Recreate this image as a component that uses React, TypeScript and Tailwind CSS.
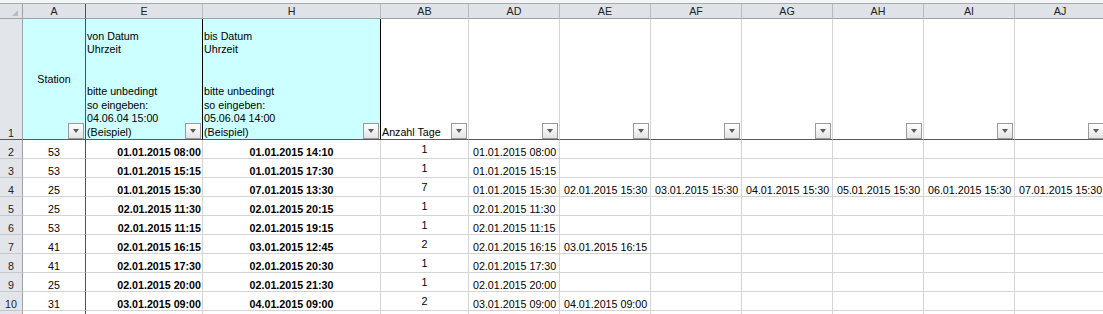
import React from "react";

const COLS =
  "grid grid-cols-[23px_63px_117px_178px_88px_91px_91px_91px_91px_91px_91px_91px]";
const EXTRA = ["AD", "AE", "AF", "AG", "AH", "AI", "AJ"];

type Row = {
  n: number;
  station: string;
  von: string;
  bis: string;
  tage: string;
  dates: string[];
};

const rows: Row[] = [
  { n: 2, station: "53", von: "01.01.2015 08:00", bis: "01.01.2015 14:10", tage: "1", dates: ["01.01.2015 08:00"] },
  { n: 3, station: "53", von: "01.01.2015 15:15", bis: "01.01.2015 17:30", tage: "1", dates: ["01.01.2015 15:15"] },
  {
    n: 4,
    station: "25",
    von: "01.01.2015 15:30",
    bis: "07.01.2015 13:30",
    tage: "7",
    dates: [
      "01.01.2015 15:30",
      "02.01.2015 15:30",
      "03.01.2015 15:30",
      "04.01.2015 15:30",
      "05.01.2015 15:30",
      "06.01.2015 15:30",
      "07.01.2015 15:30",
    ],
  },
  { n: 5, station: "25", von: "02.01.2015 11:30", bis: "02.01.2015 20:15", tage: "1", dates: ["02.01.2015 11:30"] },
  { n: 6, station: "53", von: "02.01.2015 11:15", bis: "02.01.2015 19:15", tage: "1", dates: ["02.01.2015 11:15"] },
  { n: 7, station: "41", von: "02.01.2015 16:15", bis: "03.01.2015 12:45", tage: "2", dates: ["02.01.2015 16:15", "03.01.2015 16:15"] },
  { n: 8, station: "41", von: "02.01.2015 17:30", bis: "02.01.2015 20:30", tage: "1", dates: ["02.01.2015 17:30"] },
  { n: 9, station: "25", von: "02.01.2015 20:00", bis: "02.01.2015 21:30", tage: "1", dates: ["02.01.2015 20:00"] },
  { n: 10, station: "31", von: "03.01.2015 09:00", bis: "04.01.2015 09:00", tage: "2", dates: ["03.01.2015 09:00", "04.01.2015 09:00"] },
];

function FilterButton() {
  return (
    <div className="absolute right-[1px] bottom-0 w-[16px] h-[16px] border border-[#9a9a9a] bg-linear-to-b from-white to-[#e4e4e4] flex items-center justify-center">
      <div className="w-0 h-0 border-x-[3.5px] border-x-transparent border-t-[4px] border-t-[#5c5c5c]" />
    </div>
  );
}

function HeaderLines({ lines }: { lines: string[] }) {
  return (
    <div className="leading-[13.8px] mb-[-1px] pl-[1px]">
      {lines.map((l, i) => (
        <div key={i} className="h-[13.8px] whitespace-nowrap">
          {l}
        </div>
      ))}
    </div>
  );
}

export default function App() {
  return (
    <div className="w-[1103px] h-[314px] overflow-hidden bg-white text-[10.7px] text-black font-['Liberation_Sans',Arial,sans-serif]">
      {/* strip above headers */}
      <div className="h-[4px] bg-[#f4f5f7] border-b border-[#a7abb0]" />

      {/* column letters */}
      <div className={`${COLS} h-[15px] bg-[#dfe3e8] text-[#222] leading-[14px]`}>
        <div className="border-r border-b border-r-[#9ea3a9] border-b-[#9ea3a9] flex items-end justify-end pr-[4px] pb-[2px]">
          <svg width="6" height="6" viewBox="0 0 6 6">
            <polygon points="6,0 6,6 0,6" fill="#b9bdc2" />
          </svg>
        </div>
        <div className="border-r border-b border-r-[#505050] border-b-[#9ea3a9] text-center">A</div>
        {["E", "H", "AB", ...EXTRA].map((c) => (
          <div key={c} className="border-r border-b border-r-[#b7bcc2] border-b-[#9ea3a9] text-center">
            {c}
          </div>
        ))}
      </div>

      {/* row 1: headers */}
      <div className={`${COLS} h-[121px]`}>
        <div className="bg-[#e2e6eb] border-r border-b border-r-[#9ea3a9] border-b-[#5a5a5a] text-[#222] flex items-end justify-center leading-[10px] pb-[1px]">
          1
        </div>
        <div className="relative bg-[#ccffff] border-r border-b border-r-[#505050] border-b-[#5a5a5a] flex items-center justify-center leading-[14px]">
          Station
          <FilterButton />
        </div>
        <div className="relative bg-[#ccffff] border-r border-b border-r-black border-b-[#5a5a5a] flex flex-col justify-end">
          <HeaderLines
            lines={["von Datum", "Uhrzeit", "", "", "bitte unbedingt", "so eingeben:", "04.06.04 15:00", "(Beispiel)"]}
          />
          <FilterButton />
        </div>
        <div className="relative bg-[#ccffff] border-r border-b border-r-black border-b-[#5a5a5a] flex flex-col justify-end">
          <HeaderLines
            lines={["bis Datum", "Uhrzeit", "", "", "bitte unbedingt", "so eingeben:", "05.06.04 14:00", "(Beispiel)"]}
          />
          <FilterButton />
        </div>
        <div className="relative border-r border-b border-r-[#d4d4d4] border-b-[#5a5a5a] flex flex-col justify-end">
          <HeaderLines lines={["Anzahl Tage"]} />
          <FilterButton />
        </div>
        {EXTRA.map((c) => (
          <div key={c} className="relative border-r border-b border-r-[#d4d4d4] border-b-[#5a5a5a]">
            <FilterButton />
          </div>
        ))}
      </div>

      {/* data rows */}
      {rows.map((r) => (
        <div key={r.n} className={`${COLS} h-[19px] leading-[10px]`}>
          <div className="bg-[#e2e6eb] border-r border-b border-r-[#9ea3a9] border-b-[#c5c9ce] text-[#222] flex items-end justify-center pb-[1px]">
            {r.n}
          </div>
          <div className="border-r border-b border-r-[#505050] border-b-[#d4d4d4] flex items-end justify-center pb-[1px]">
            {r.station}
          </div>
          <div className="border-r border-b border-[#d4d4d4] flex items-end justify-end pr-[1px] pb-[1px] font-bold whitespace-nowrap">
            {r.von}
          </div>
          <div className="border-r border-b border-[#d4d4d4] flex items-end justify-center pb-[1px] font-bold whitespace-nowrap">
            {r.bis}
          </div>
          <div className="border-r border-b border-[#d4d4d4] text-center pt-[2px] leading-[14px]">{r.tage}</div>
          {EXTRA.map((c, i) => (
            <div
              key={c}
              className="border-r border-b border-[#d4d4d4] flex items-end pl-[4px] pb-[1px] whitespace-nowrap"
            >
              {r.dates[i] ?? ""}
            </div>
          ))}
        </div>
      ))}

      {/* row 11, mostly out of view */}
      <div className={`${COLS} h-[19px]`}>
        <div className="bg-[#e2e6eb] border-r border-b border-r-[#9ea3a9] border-b-[#c5c9ce]" />
        <div className="border-r border-b border-r-[#505050] border-b-[#d4d4d4]" />
        {["E", "H", "AB", ...EXTRA].map((c) => (
          <div key={c} className="border-r border-b border-[#d4d4d4]" />
        ))}
      </div>
    </div>
  );
}
